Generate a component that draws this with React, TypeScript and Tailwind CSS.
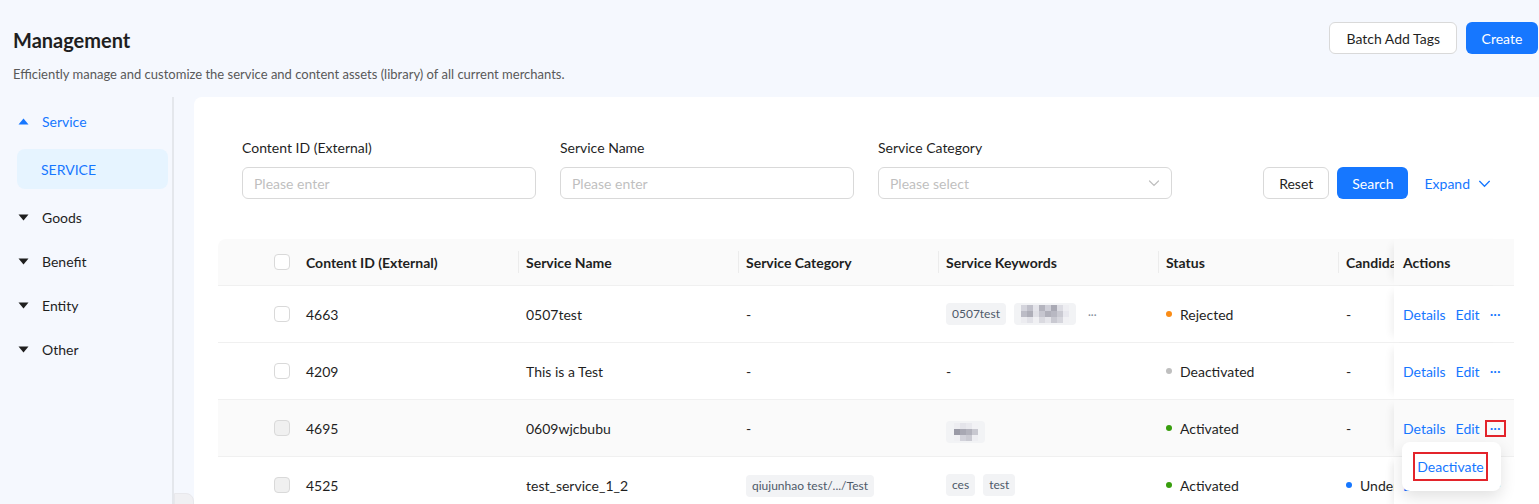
import React from "react";

const font = { fontFamily: "Lato, 'Liberation Sans', sans-serif" };

const Tri = ({ up, blue }: { up?: boolean; blue?: boolean }) => (
  <svg width="11" height="7" viewBox="0 0 11 7" className={up ? "" : "rotate-180"}>
    <path d="M5.5 0.5 L10.5 6.5 L0.5 6.5 Z" fill={blue ? "#1677ff" : "#1f1f1f"} />
  </svg>
);

const Chevron = ({ color, size = 12 }: { color: string; size?: number }) => (
  <svg width={size} height={size} viewBox="0 0 12 12" fill="none">
    <path d="M1.5 4 L6 8.5 L10.5 4" stroke={color} strokeWidth="1.2" strokeLinecap="round" />
  </svg>
);

const Mosaic = ({ cells, cols }: { cells: string[]; cols: number }) => (
  <div className="grid" style={{ gridTemplateColumns: `repeat(${cols}, 6px)` }}>
    {cells.map((c, i) => (
      <div key={i} className="h-[6px] w-[6px]" style={{ backgroundColor: c }} />
    ))}
  </div>
);

const Tag = ({ children, className = "" }: { children: React.ReactNode; className?: string }) => (
  <span
    className={
      "inline-flex h-[22px] items-center rounded-[4px] bg-[#f2f3f5] px-[6px] text-[12px] text-[#4e5969] " +
      className
    }
  >
    {children}
  </span>
);

const Checkbox = ({ disabled }: { disabled?: boolean }) => (
  <span
    className={
      "block h-[16px] w-[16px] rounded-[4px] border border-[#d9d9d9] " +
      (disabled ? "bg-[#f0f0f0]" : "bg-white")
    }
  />
);

const Dot = ({ color }: { color: string }) => (
  <span
    className="mr-[8px] inline-block h-[6px] w-[6px] shrink-0 rounded-full"
    style={{ backgroundColor: color }}
  />
);

const Sep = () => <span className="absolute left-0 top-1/2 h-[22px] w-px -translate-y-1/2 bg-[#ececec]" />;

type Row = {
  id: string;
  name: string;
  category: React.ReactNode;
  keywords: React.ReactNode;
  status: string;
  dot: string;
  candidate: React.ReactNode;
  disabled?: boolean;
  hover?: boolean;
  menu?: boolean;
};

const g1 = ["#d4d4dc", "#c0c0ca", "#e4e4ea", "#b4b4be", "#cfcfd8", "#a9a9b4", "#dcdce3", "#eeeef2",
  "#bcbcc6", "#aeaeb8", "#e0e0e6", "#c6c6cf", "#b0b0ba", "#b8b8c2", "#cacad2", "#e8e8ee",
  "#ececf0", "#e2e2e8", "#f0f0f3", "#dadae0", "#e6e6eb", "#c9c9d1", "#d6d6dd", "#f1f1f4"];
const g2 = ["#ededf1", "#e4e4ea", "#e9e9ee", "#f2f2f5",
  "#9a9aa6", "#a8a8b3", "#b2b2bc", "#c8c8d0",
  "#f0f0f3", "#d2d2da", "#cacad2", "#eeeef2"];

const rows: Row[] = [
  {
    id: "4663",
    name: "0507test",
    category: "-",
    keywords: (
      <div className="flex items-center gap-[8px]">
        <Tag>0507test</Tag>
        <span className="inline-flex h-[22px] w-[62px] items-center justify-center rounded-[4px] bg-[#f2f3f5]">
          <Mosaic cells={g1} cols={8} />
        </span>
        <span className="ml-[4px] text-[11px] leading-none text-[#86909c]">···</span>
      </div>
    ),
    status: "Rejected",
    dot: "#fa8c16",
    candidate: "-",
  },
  {
    id: "4209",
    name: "This is a Test",
    category: "-",
    keywords: "-",
    status: "Deactivated",
    dot: "#bfbfbf",
    candidate: "-",
  },
  {
    id: "4695",
    name: "0609wjcbubu",
    category: "-",
    keywords: (
      <span className="inline-flex h-[22px] w-[39px] items-center justify-center rounded-[4px] bg-[#f2f3f5]">
        <Mosaic cells={g2} cols={4} />
      </span>
    ),
    status: "Activated",
    dot: "#389e0d",
    candidate: "-",
    disabled: true,
    hover: true,
    menu: true,
  },
  {
    id: "4525",
    name: "test_service_1_2",
    category: <Tag>qiujunhao test/.../Test</Tag>,
    keywords: (
      <div className="flex items-center gap-[8px]">
        <Tag>ces</Tag>
        <Tag>test</Tag>
      </div>
    ),
    status: "Activated",
    dot: "#389e0d",
    candidate: (
      <span className="flex items-center whitespace-nowrap">
        <Dot color="#1677ff" />
        Under Review
      </span>
    ),
    disabled: true,
  },
];

const Field = ({ label, placeholder, select }: { label: string; placeholder: string; select?: boolean }) => (
  <div className="w-[294px]">
    <div className="mb-[8px] text-[14px] leading-[22px] text-[#1f1f1f]">{label}</div>
    <div className="flex h-[32px] items-center justify-between rounded-[6px] border border-[#d9d9d9] bg-white px-[11px]">
      <span className="text-[14px] text-[#bfbfbf]">{placeholder}</span>
      {select && <Chevron color="#bfbfbf" />}
    </div>
  </div>
);

export default function App() {
  return (
    <div className="relative h-[504px] w-[1539px] overflow-hidden bg-[#f5f8fe] text-[#1f1f1f]" style={font}>
      {/* header */}
      <div className="flex items-start justify-between pl-[13px] pr-[1px] pt-[22px]">
        <div>
          <h1 className="mt-[4px] text-[20px] font-bold leading-[28px] text-[#1f1f1f]">Management</h1>
          <p className="mt-[11px] text-[13px] leading-[18px] text-[#595959]">
            Efficiently manage and customize the service and content assets (library) of all current merchants.
          </p>
        </div>
        <div className="flex gap-[9px]">
          <button className="h-[32px] rounded-[6px] border border-[#d9d9d9] bg-white px-[16px] text-[14px] text-[#1f1f1f]">
            Batch Add Tags
          </button>
          <button className="h-[32px] w-[72px] rounded-[6px] bg-[#1677ff] text-[14px] text-white">Create</button>
        </div>
      </div>

      {/* body */}
      <div className="mt-[14px] flex h-[410px]">
        <aside className="relative w-[174px] shrink-0 border-r-2 border-[#e4e7ec] pt-[2px]">
          <div className="flex h-[44px] items-center gap-[13px] pl-[18px] text-[14px] text-[#1677ff]">
            <Tri up blue />
            Service
          </div>
          <div className="ml-[17px] mt-[6px] flex h-[40px] w-[151px] items-center rounded-[8px] bg-[#e6f4ff] pl-[24px] text-[14px] text-[#1677ff]">
            SERVICE
          </div>
          <div className="mt-[6px]">
            {["Goods", "Benefit", "Entity", "Other"].map((t) => (
              <div key={t} className="flex h-[44px] items-center gap-[13px] pl-[18px] text-[14px] text-[#1f1f1f]">
                <Tri />
                {t}
              </div>
            ))}
          </div>
          <div className="absolute -right-[22px] top-[396px] h-[14px] w-[20px] rounded-tr-[8px] border border-[#e8e8ec] bg-[#f0f0f3]" />
        </aside>

        <main className="ml-[20px] flex-1 rounded-tl-[8px] bg-white pl-[24px] pr-[25px] pt-[40px]">
          {/* filters */}
          <div className="flex items-end pl-[24px] pr-[23px]">
            <div className="flex gap-[24px]">
              <Field label="Content ID (External)" placeholder="Please enter" />
              <Field label="Service Name" placeholder="Please enter" />
              <Field label="Service Category" placeholder="Please select" select />
            </div>
            <div className="ml-auto flex items-center gap-[8px]">
              <button className="h-[32px] rounded-[6px] border border-[#d9d9d9] bg-white px-[15px] text-[14px]">
                Reset
              </button>
              <button className="h-[32px] rounded-[6px] bg-[#1677ff] px-[15px] text-[14px] text-white">Search</button>
              <button className="ml-[8px] flex h-[32px] items-center gap-[8px] text-[14px] text-[#1677ff]">
                Expand
                <Chevron color="#1677ff" size={13} />
              </button>
            </div>
          </div>

          {/* table */}
          <div className="mt-[40px] w-[1296px] text-[14px]">
            <div className="flex h-[47px] items-center rounded-t-[8px] border-b border-[#f0f0f0] bg-[#fafafa] font-bold">
              <div className="flex w-[80px] shrink-0 pl-[56px]">
                <Checkbox />
              </div>
              <div className="w-[220px] shrink-0 pl-[8px]">Content ID (External)</div>
              <div className="relative w-[220px] shrink-0 pl-[8px]">
                <Sep />
                Service Name
              </div>
              <div className="relative w-[200px] shrink-0 pl-[8px]">
                <Sep />
                Service Category
              </div>
              <div className="relative w-[220px] shrink-0 pl-[8px]">
                <Sep />
                Service Keywords
              </div>
              <div className="relative w-[180px] shrink-0 pl-[8px]">
                <Sep />
                Status
              </div>
              <div className="relative w-[56px] shrink-0 overflow-hidden whitespace-nowrap pl-[8px]">
                <Sep />
                Candidate
              </div>
              <div className="flex h-full w-[120px] shrink-0 items-center bg-[#fafafa] pl-[9px] shadow-[-8px_0_8px_-6px_rgba(0,0,0,0.07)]">
                Actions
              </div>
            </div>

            {rows.map((r) => (
              <div
                key={r.id}
                className={
                  "flex h-[57px] items-center border-b border-[#f0f0f0] " + (r.hover ? "bg-[#fafafa]" : "bg-white")
                }
              >
                <div className="flex w-[80px] shrink-0 pl-[56px]">
                  <Checkbox disabled={r.disabled} />
                </div>
                <div className="w-[220px] shrink-0 pl-[8px]">{r.id}</div>
                <div className="w-[220px] shrink-0 pl-[8px]">{r.name}</div>
                <div className="w-[200px] shrink-0 pl-[8px]">{r.category}</div>
                <div className="w-[220px] shrink-0 pl-[8px]">{r.keywords}</div>
                <div className="flex w-[180px] shrink-0 items-center pl-[8px]">
                  <Dot color={r.dot} />
                  {r.status}
                </div>
                <div className="w-[56px] shrink-0 overflow-hidden pl-[8px]">{r.candidate}</div>
                <div
                  className={
                    "relative flex h-full w-[120px] shrink-0 items-center gap-[10px] pl-[9px] text-[#1677ff] shadow-[-8px_0_8px_-6px_rgba(0,0,0,0.07)] " +
                    (r.hover ? "bg-[#fafafa]" : "bg-white")
                  }
                >
                  <span>Details</span>
                  <span>Edit</span>
                  <span
                    className={
                      "-ml-[5px] flex h-[17px] w-[21px] items-center justify-center leading-none " +
                      (r.menu ? "border-2 border-[#e3242b]" : "")
                    }
                  >
                    ···
                  </span>
                  {r.menu && (
                    <div className="absolute left-[8px] top-[42px] z-10 flex h-[49px] w-[99px] items-center rounded-[8px] bg-white pl-[11px] shadow-[0_6px_16px_rgba(0,0,0,0.12)]">
                      <span className="flex h-[29px] w-[75px] items-center justify-center border-2 border-[#e3242b] text-[#1677ff]">
                        Deactivate
                      </span>
                    </div>
                  )}
                </div>
              </div>
            ))}
          </div>
        </main>
      </div>
    </div>
  );
}
